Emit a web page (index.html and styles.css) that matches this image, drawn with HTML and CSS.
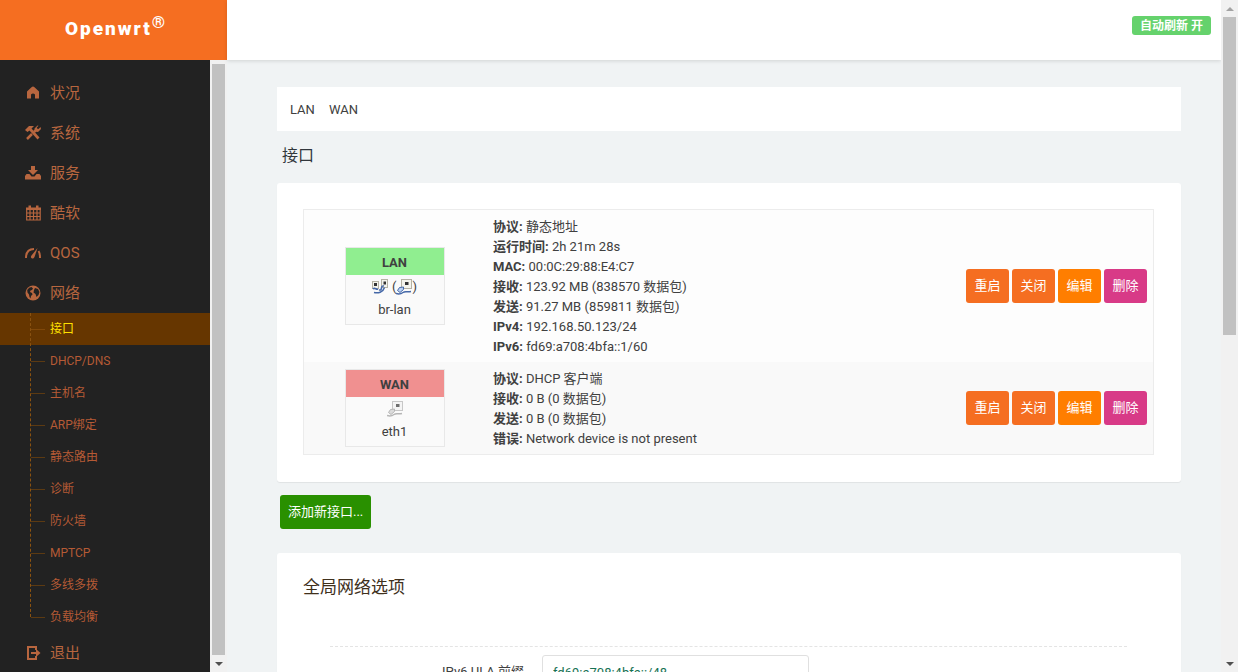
FILE: index.html
```html
<!DOCTYPE html>
<html lang="zh-CN">
<head>
<meta charset="utf-8">
<title>Openwrt - 接口</title>
<link rel="stylesheet" href="styles.css">
</head>
<body>
<svg class="defs" aria-hidden="true">
  <symbol id="plug" viewBox="0 0 16 16">
    <rect x="5.500" y=".5" width="10" height="9" fill="#f3f3ec" stroke="#b5b2a4"/>
    <rect x="9" y="3" width="3.500" height="3" fill="#333"/>
    <path d="M1.500 11.500 3.500 8.500 7.500 8 7.500 10.500 4 13.500Z" fill="#b9d0f2" stroke="currentColor"/>
    <path d="M0 14.500C3 15.500 5 15 7 13.500S11 13.500 15 12.500" fill="none" stroke="currentColor" stroke-width="1.500"/>
  </symbol>
  <symbol id="bridge" viewBox="0 0 16 16">
    <rect x=".5" y="2.500" width="6" height="7" fill="#f3f3ec" stroke="#b5b2a4"/>
    <rect x="9.500" y=".5" width="6" height="8" fill="#f3f3ec" stroke="#b5b2a4"/>
    <path d="M2 4h3v3H2zM11.500 2.500h2.500v3h-2.500z" fill="#333"/>
    <path d="M1 10c2-2 3 1 5 0M7 11c4 1 1-5 5-4M2 13.500c4 1 9 0 10.500-5" fill="none" stroke="currentColor" stroke-width="1.500"/>
  </symbol>
</svg>
<div class="app">
  <aside class="side">
    <header class="brand">Openwrt<sup>®</sup></header>
    <div class="side-body">
      <nav class="nav">
        <a href="#"><svg viewBox="0 0 16 16"><path d="M8 1.500Q7.300 1.500 6.500 2.300L2 6.500V13.500H6V9.500Q8 7.500 10 9.500V13.500H14V6.500L9.500 2.300Q8.700 1.500 8 1.500Z"/></svg>状况</a>
        <a href="#"><svg viewBox="0 0 16 16"><path d="M0 5 4 1h5L6.500 3.500 14.500 12.500 12.500 14.500 4.500 5.500 2.500 7Z"/><path d="m2 14 5-5M9 7l3-3" fill="none" stroke="currentColor" stroke-width="2.500"/><path d="M12.500.5 9.500 3.500 10 6.500 13 7 16 4 15.500 2 13.500 4 12 3.500 11.800 2.500 13.500.8Z"/></svg>系统</a>
        <a href="#"><svg viewBox="0 0 16 16"><path d="M6 1h4v4h3L8 10 3 5h3Z"/><path d="M1.500 9h3l2 2.500h3l2-2.500h3L16 11v3.500H0V11Z"/></svg>服务</a>
        <a href="#"><svg viewBox="0 0 16 16"><path d="M1.700 4h13.500v11H1.700zM2 8h13M2 11.500h13M5 4v11M8.500 4v11M12 4v11" fill="none" stroke="currentColor" stroke-width="1.200"/><path d="M1 2.500h15v2.500H1zM3.500.500h2.500v3H3.500zM11 .5h2.500v3H11z"/></svg>酷软</a>
        <a href="#"><svg viewBox="0 0 16 16"><path d="M1 13C1 7 4 4 9 4M13.500 6C15 8 15 10 15 13" fill="none" stroke="currentColor" stroke-width="2"/><path d="M12.500 3 9.500 12Q8.500 14 7 13.500Q5 12.500 6.500 10.500Z"/></svg>QOS</a>
        <a href="#"><svg viewBox="0 0 16 16"><circle cx="8" cy="8" r="7.500"/><path d="M2.200 5Q4 2 6.500 2L8 3.500 7 5 5.500 5.500 5 7 7 8 7.500 9.500 6 11 5.500 13.500 4.500 12 4 9.500 2.500 7.500ZM10 3l3 1 1.500 3-1 3-2 2-1-3-2-1.500.5-2.500Z" fill="#222"/></svg>网络</a>
        <div class="sub">
          <a href="#" class="active">接口</a>
          <a href="#">DHCP/DNS</a>
          <a href="#">主机名</a>
          <a href="#">ARP绑定</a>
          <a href="#">静态路由</a>
          <a href="#">诊断</a>
          <a href="#">防火墙</a>
          <a href="#">MPTCP</a>
          <a href="#">多线多拨</a>
          <a href="#">负载均衡</a>
        </div>
        <a href="#"><svg viewBox="0 0 16 16"><path d="M11 5V2H3v12h8v-3" fill="none" stroke="currentColor" stroke-width="2"/><path d="M6 7h5V4l4.500 4L11 12V9H6Z"/></svg>退出</a>
      </nav>
      <div class="bar side-bar"><div class="thumb"></div><i class="down"></i></div>
    </div>
  </aside>

  <div class="page">
    <header class="top"><a href="#" class="badge">自动刷新 开</a></header>
    <main>
      <nav class="tabs"><a href="#">LAN</a><a href="#">WAN</a></nav>
      <h2>接口</h2>
      <section class="panel">
        <table>
          <tr>
            <td class="iface"><div class="box up"><b>LAN</b><div class="devs"><svg viewBox="0 0 16 16"><use href="#bridge"/></svg><span>(<svg viewBox="0 0 16 16"><use href="#plug"/></svg>)</span></div><div>br-lan</div></div></td>
            <td class="info"><b>协议:</b> 静态地址<br><b>运行时间:</b> 2h 21m 28s<br><b>MAC:</b> 00:0C:29:88:E4:C7<br><b>接收:</b> 123.92 MB (838570 数据包)<br><b>发送:</b> 91.27 MB (859811 数据包)<br><b>IPv4:</b> 192.168.50.123/24<br><b>IPv6:</b> fd69:a708:4bfa::1/60</td>
            <td><div class="actions"><button>重启</button><button>关闭</button><button class="edit">编辑</button><button class="remove">删除</button></div></td>
          </tr>
          <tr>
            <td class="iface"><div class="box down-state"><b>WAN</b><div class="devs off"><svg viewBox="0 0 16 16"><use href="#plug"/></svg></div><div>eth1</div></div></td>
            <td class="info"><b>协议:</b> DHCP 客户端<br><b>接收:</b> 0 B (0 数据包)<br><b>发送:</b> 0 B (0 数据包)<br><b>错误:</b> Network device is not present</td>
            <td><div class="actions"><button>重启</button><button>关闭</button><button class="edit">编辑</button><button class="remove">删除</button></div></td>
          </tr>
        </table>
      </section>
      <button class="add">添加新接口...</button>
      <section class="panel">
        <h3>全局网络选项</h3>
        <div class="field">
          <label for="ula">IPv6 ULA 前缀</label>
          <input id="ula" type="text" value="fd69:a708:4bfa::/48">
        </div>
      </section>
    </main>
  </div>
  <div class="bar page-bar"><i class="up-arrow"></i><div class="thumb"></div><i class="down"></i></div>
</div>
</body>
</html>
```
FILE: styles.css
```css
* { box-sizing: border-box; }
body {
  margin: 0;
  overflow: hidden;
  background: #f0f3f4;
  color: #404040;
  font: 13px/20px Roboto, "Noto Sans CJK SC", sans-serif;
}
a { color: inherit; text-decoration: none; }
button, input { font: inherit; }
.defs { position: absolute; width: 0; height: 0; }

.app { display: flex; height: 100vh; }

/* sidebar */
.side { display: flex; flex-direction: column; flex: 0 0 227px; }
.brand {
  flex: 0 0 60px;
  background: #f56e21;
  color: #fff;
  font-size: 19px;
  font-weight: 900;
  line-height: 58px;
  letter-spacing: 2px;
  text-align: center;
  padding-left: 5px;
}
.brand sup { font-size: 17px; font-weight: 700; line-height: 0; }
.side-body { display: flex; flex: 1; min-height: 0; background: #222; }
.nav { flex: 1; padding-top: 13px; overflow: hidden; color: #b8663f; }
.nav > a {
  display: flex;
  align-items: center;
  gap: 9px;
  height: 40px;
  padding-left: 25px;
  font-size: 15px;
  line-height: 20px;
  padding-bottom: 1px;
}
.nav svg { width: 16px; height: 16px; fill: currentColor; }
.sub { position: relative; font-size: 12px; color: #b55a35; }
.sub::before {
  content: "";
  position: absolute;
  z-index: 1;
  top: 0;
  bottom: 16px;
  left: 30px;
  border-left: 1px dashed #8a5210;
}
.sub a { display: flex; align-items: center; height: 32px; padding-left: 31px; }
.sub a::before { content: ""; width: 14px; margin-right: 5px; border-top: 1px solid #5c3a12; }
.sub .active { background: #663600; color: #ffe100; }
.sub .active::before { border-color: #80480a; }

/* scrollbars */
.bar { display: flex; flex-direction: column; flex: 0 0 17px; align-items: center; background: #f1f1f1; }
.thumb { width: 13px; background: #c1c1c1; }
.side-bar .thumb { flex: 1; margin-top: 4px; }
.page-bar .thumb { height: 318px; margin-bottom: auto; }
.bar i { flex: 0 0 17px; width: 17px; display: grid; place-items: center; }
.bar i::before { content: ""; border: 4px solid transparent; }
.bar .down::before { border-top-color: #505050; border-bottom: 0; }
.bar .up-arrow::before { border-bottom-color: #a3a3a3; border-top: 0; }

/* content */
.page { flex: 1; min-width: 0; }
.top {
  display: flex;
  justify-content: flex-end;
  align-items: flex-start;
  height: 60px;
  padding: 16px 10px;
  background: #fff;
  box-shadow: 0 1px 4px #0002;
}
.badge {
  padding: 1px 8px 0;
  border-radius: 3px;
  background: #65d26c;
  color: #fff;
  font-size: 12px;
  font-weight: 700;
  line-height: 18px;
}
main { padding: 27px 40px 0 50px; }
.tabs { display: flex; gap: 14px; padding: 13px 13px 11px; background: #fff; }
h2 { margin: 0; padding: 13px 5px 15px; font-size: 16px; line-height: 24px; font-weight: 400; color: #32373c; }
.panel { padding: 26px 27px 27px 26px; border-radius: 3px; background: #fff; box-shadow: 0 1px 1px #0001; }
table { width: 100%; border-collapse: separate; border-spacing: 0; border: 1px solid #ececec; }
tr { background: #fdfdfd; }
tr:nth-child(2) { background: #f9f9f9; }
td { padding: 6px; }
.iface { width: 183px; padding: 6px 7px 6px 5px; }
.info { padding: 7px 6px 5px; }
.box { width: 100px; height: 78px; margin: 0 auto; border: 1px solid #e8e8e8; background: #fafafa; text-align: center; }
.box b { display: block; padding: 5px 0 3px; line-height: 19px; }
.up b { background: #90ee90; }
.down-state b { background: #f09090; }
.devs { display: flex; justify-content: center; align-items: center; gap: 4px; height: 24px; margin-bottom: 1px; color: #4568a8; }
.devs span { display: flex; align-items: center; color: #404040; }
.devs span svg { color: #4568a8; }
.devs svg { width: 16px; height: 16px; }
.devs.off { color: #999; }
.off svg { filter: grayscale(1); opacity: .7; }
.actions { display: flex; justify-content: flex-end; gap: 3px; }
button {
  height: 34px;
  padding: 0 8px;
  border: 0;
  border-radius: 3px;
  background: #f56e21;
  color: #fff;
}
.actions button { width: 43px; }
.actions .edit { background: #ff7e00; }
.actions .remove { background: #d83a87; }
button.add { display: block; margin: 13px 3px 24px; background: #299000; }
h3 { margin: 0; font-size: 17px; line-height: 16px; font-weight: 400; color: #40301c; }
.field {
  display: flex;
  align-items: center;
  gap: 18px;
  margin: 51px 27px 0;
  padding-top: 8px;
  border-top: 1px dashed #e4e4e4;
}
.field label { width: 194px; text-align: right; }
.field input {
  width: 267px;
  height: 34px;
  padding: 0 10px;
  border: 1px solid #e0e0e0;
  border-radius: 3px;
  color: #177254;
}
```
